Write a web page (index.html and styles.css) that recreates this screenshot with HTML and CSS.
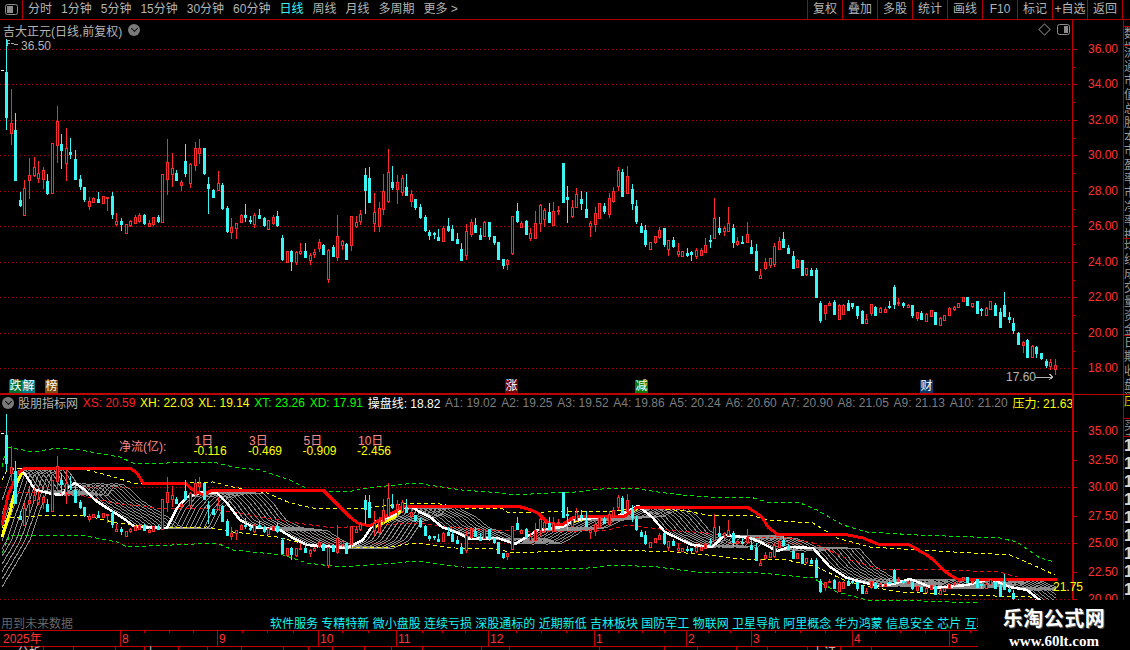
FILE: index.html
```html
<!DOCTYPE html>
<html lang="zh-CN">
  <head>
    <meta charset="UTF-8" />
    <title>吉大正元</title>
    <link rel="stylesheet" href="styles.css">
  </head>
  <body>
    <div class="app">
      <header class="toolbar">
        <div class="panel-toggle">
          <svg class="box-icon" viewBox="0 0 13 11"><rect x="0.5" y="0.5" width="12" height="10" rx="2" class="box-line"></rect><rect x="2" y="2" width="6" height="7" class="box-fill"></rect></svg>
        </div>
        <nav class="periods">
          <span>分时</span><span>1分钟</span><span>5分钟</span><span>15分钟</span><span>30分钟</span><span>60分钟</span>
          <span class="active">日线</span><span>周线</span><span>月线</span><span>多周期</span><span>更多 &gt;</span>
        </nav>
        <nav class="tools">
          <span>复权</span><span>叠加</span><span>多股</span><span>统计</span><span>画线</span><span>F10</span><span>标记</span><span>+自选</span><span>返回</span>
        </nav>
      </header>

      <div class="workspace">
        <div class="charts">
          <section class="pane">
            <svg id="priceChart" class="chart price-chart" viewBox="0 20 1123 375"></svg>
            <div class="pane-title">
              <span>吉大正元(日线,前复权)</span>
              <i class="round-btn"></i>
            </div>
            <div class="pane-tools">
              <span class="diamond"></span>
              <svg class="box-icon" viewBox="0 0 13 11"><rect x="0.5" y="0.5" width="12" height="10" rx="2" class="box-line"></rect><rect x="7" y="2" width="4" height="7" class="box-fill"></rect></svg>
            </div>
            <span class="badge badge-die">跌</span>
            <span class="badge badge-jie">解</span>
            <span class="badge badge-bang">榜</span>
            <span class="badge badge-zhang">涨</span>
            <span class="badge badge-jian">减</span>
            <span class="badge badge-cai">财</span>
          </section>

          <section class="pane">
            <svg id="indicatorChart" class="chart indicator-chart" viewBox="0 395 1123 235"></svg>
            <div class="pane-info">
              <i class="round-btn"></i>
              <span class="info-name">股朋指标网</span>
              <span class="red">XS: 20.59</span>
              <span class="yellow">XH: 22.03</span>
              <span class="yellow">XL: 19.14</span>
              <span class="green">XT: 23.26</span>
              <span class="green">XD: 17.91</span>
              <span class="white">操盘线: 18.82</span>
              <span>A1: 19.02</span>
              <span>A2: 19.25</span>
              <span>A3: 19.52</span>
              <span>A4: 19.86</span>
              <span>A5: 20.24</span>
              <span>A6: 20.60</span>
              <span>A7: 20.90</span>
              <span>A8: 21.05</span>
              <span>A9: 21.13</span>
              <span>A10: 21.20</span>
              <span class="yellow">压力: 21.63</span>
            </div>
            <div class="flows">
              <span class="flow-name">净流(亿):</span>
              <div class="flow"><span>1日</span><b>-0.116</b></div>
              <div class="flow"><span>3日</span><b>-0.469</b></div>
              <div class="flow"><span>5日</span><b>-0.909</b></div>
              <div class="flow"><span>10日</span><b>-2.456</b></div>
            </div>
            <div class="pane-foot">
              <span class="future">用到未来数据</span>
              <span class="tags">软件服务 专精特新 微小盘股 连续亏损 深股通标的 近期新低 吉林板块 国防军工 物联网 卫星导航 阿里概念 华为鸿蒙 信息安全 芯片 互联网</span>
            </div>
          </section>

          <svg id="timeAxis" class="chart time-axis" viewBox="0 630 1123 20"></svg>
        </div>

        <aside class="side">
          <div class="side-cell side-short">数据</div>
          <div class="side-cell side-long">流通市值总股本市盈率市净率换手率振幅量比内盘外盘开盘最高最低昨收均价</div>
          <div class="side-cell side-mid">均线成交量资金主力净额</div>
          <div class="side-cell side-low">日期收盘涨跌幅</div>
          <div class="side-cell side-yellow">压</div>
          <div class="side-cell side-low2">买卖</div>
          <div class="side-cell side-nums">1 1 1 1 1 1 1 1 1 1 1 1 1</div>
        </aside>
      </div>

      <div class="watermark">
        <strong>乐淘公式网</strong>
        <em>www.60lt.com</em>
      </div>
    </div>
    <script src="chart.js"></script>
  </body>
</html>
```

FILE: styles.css
```css
html,
body {
  margin: 0;
  background: #000;
  font-family: "Liberation Sans", "Noto Sans CJK SC", sans-serif;
  font-size: 12px;
  color: #b4b4b4;
}
.app {
  position: relative;
  width: 1130px;
  height: 650px;
  overflow: hidden;
}
.toolbar {
  display: flex;
  height: 19px;
  line-height: 19px;
  border-bottom: 1px solid #b00000;
}
.panel-toggle {
  display: flex;
  align-items: center;
  justify-content: center;
  width: 22px;
  border-right: 1px solid #b00000;
}
.box-icon {
  display: block;
  width: 13px;
  height: 11px;
}
.box-line {
  fill: none;
  stroke: #8c8c8c;
}
.box-fill {
  fill: #8c8c8c;
}
.periods {
  display: flex;
  gap: 9px;
  margin-left: 5px;
}
.periods .active {
  color: #3cf5f5;
}
.tools {
  display: flex;
  margin-left: auto;
  margin-right: 7px;
  border-right: 1px solid #b00000;
}
.tools span {
  width: 34px;
  border-left: 1px solid #b00000;
  text-align: center;
}
.workspace {
  display: flex;
}
.charts {
  width: 1123px;
  border-right: 1px solid #b00000;
}
.pane {
  position: relative;
}
.chart {
  display: block;
  width: 1123px;
}
.price-chart {
  height: 375px;
}
.indicator-chart {
  height: 235px;
}
.time-axis {
  height: 20px;
}
.chart text {
  font-family: "Liberation Sans", "Noto Sans CJK SC", sans-serif;
  font-size: 12px;
}
.pane-title {
  position: absolute;
  top: 2px;
  left: 3px;
  display: flex;
  align-items: center;
  gap: 6px;
  height: 16px;
}
.round-btn {
  position: relative;
  display: block;
  flex: none;
  width: 12px;
  height: 12px;
  border-radius: 50%;
  background: #7a7a7a;
}
.round-btn::after {
  content: "";
  position: absolute;
  top: 2px;
  left: 3.5px;
  width: 4px;
  height: 4px;
  border-right: 1px solid #111;
  border-bottom: 1px solid #111;
  transform: rotate(45deg);
}
.pane-tools {
  position: absolute;
  top: 3px;
  left: 1040px;
  display: flex;
  align-items: center;
  gap: 8px;
  height: 13px;
}
.diamond {
  display: block;
  width: 7px;
  height: 7px;
  border: 1px solid #777;
  transform: rotate(45deg);
}
.badge {
  position: absolute;
  top: 360px;
  width: 13px;
  height: 13px;
  line-height: 13px;
  text-align: center;
  color: #fff;
}
.badge-die {
  left: 9px;
  background: #006f2e;
}
.badge-jie {
  left: 22px;
  background: #007b80;
}
.badge-bang {
  left: 45px;
  background: #7c4a0c;
}
.badge-zhang {
  left: 505px;
  background: #6e0505;
}
.badge-jian {
  left: 635px;
  background: #0a7a0a;
}
.badge-cai {
  left: 920px;
  background: #0c3b6b;
}
.pane-info {
  position: absolute;
  top: 0;
  left: 2px;
  display: flex;
  align-items: center;
  gap: 4.7px;
  width: 1070px;
  height: 15px;
  overflow: hidden;
  white-space: nowrap;
  color: #7d7d7d;
}
.info-name {
  margin-left: -0.7px;
  color: #b4b4b4;
}
.red {
  color: #ff2020;
}
.yellow {
  color: #ffff00;
}
.green {
  color: #00ff00;
}
.white {
  color: #fff;
}
.flows {
  position: absolute;
  top: 41px;
  left: 119px;
  display: flex;
  line-height: 10px;
  color: #ff8a8a;
}
.flow-name {
  width: 74.5px;
  padding-top: 6px;
}
.flow {
  display: flex;
  flex-direction: column;
  width: 54.5px;
}
.flow span {
  padding-left: 1px;
}
.flow b {
  font-weight: 400;
  color: #ffff00;
}
.pane-foot {
  position: absolute;
  left: 1px;
  bottom: 0;
  display: flex;
  align-items: center;
  height: 16px;
  white-space: nowrap;
}
.future {
  width: 269px;
  color: #666;
}
.tags {
  color: #17f4f4;
}
.side {
  width: 6px;
  overflow: hidden;
  line-height: 14px;
  color: #9a9a9a;
}
.side-cell {
  width: 12px;
  overflow: hidden;
  box-sizing: border-box;
  border-bottom: 1px solid #b00000;
  margin-top: 0;
}
.side-short {
  height: 20px;
  margin-top: 6px;
  border-top: 1px solid #b00000;
}
.side-long {
  height: 193px;
}
.side-mid {
  height: 97px;
}
.side-low {
  height: 59px;
}
.side-yellow {
  height: 24px;
  color: #e0e000;
}
.side-low2 {
  height: 18px;
}
.side-nums {
  height: 193px;
  font-size: 16px;
  font-weight: 700;
  line-height: 18px;
  color: #d8d8d8;
  border-bottom: 0;
}
.watermark {
  position: absolute;
  top: 600px;
  left: 978px;
  right: 0;
  bottom: 0;
  display: flex;
  flex-direction: column;
  align-items: center;
  padding-top: 7px;
  background: #000;
  color: #fff;
  box-sizing: border-box;
}
.watermark strong {
  font-size: 20px;
  line-height: 24px;
  letter-spacing: 0.5px;
  text-shadow: 1px 1px 1px #6a6a6a;
}
.watermark em {
  font-family: "Liberation Serif", serif;
  font-size: 15px;
  font-style: normal;
  font-weight: 700;
  line-height: 20px;
}
```

FILE: chart.js
```js
// candles as pixel rows of the price pane: [high, bodyTop, bodyBottom, low, cyan]
const candles = [
  [39,72,117,130,1],[89,123,133,145,0],[113,130,180,180,1],[192,200,205,207,1],[180,188,215,215,0],
  [158,175,180,199,0],[157,167,175,177,0],[161,173,178,183,0],[167,170,179,189,0],[174,181,193,195,1],
  [143,143,193,193,0],[106,121,145,163,0],[134,144,150,169,1],[128,148,163,181,0],[138,152,154,159,1],
  [150,159,179,179,1],[175,179,186,190,1],[187,187,199,202,1],[197,201,206,210,0],[197,198,202,203,0],
  [192,199,202,203,1],[196,196,203,204,0],[197,197,198,211,0],[192,196,214,219,1],[213,221,224,226,0],
  [218,221,224,231,1],[224,224,233,233,0],[220,221,225,227,0],[215,217,223,223,0],[213,215,221,223,0],
  [214,215,223,225,1],[220,223,226,227,0],[217,217,224,226,0],[215,217,221,223,1],[174,174,222,222,0],
  [139,162,179,195,0],[153,168,174,187,0],[170,173,180,180,1],[180,182,185,191,0],[144,161,173,177,1],
  [163,164,183,188,0],[142,148,165,171,0],[139,148,153,164,0],[148,148,173,175,1],[177,184,188,214,1],
  [189,190,197,198,1],[171,183,190,190,0],[183,185,208,210,1],[206,208,231,233,1],[218,227,232,239,0],
  [223,223,228,239,0],[214,215,222,223,0],[204,215,217,222,1],[216,220,221,224,1],[213,215,224,228,0],
  [209,215,218,219,1],[217,218,225,227,1],[220,220,229,229,0],[215,217,223,225,0],[211,216,225,227,1],
  [235,238,259,261,1],[251,251,262,262,0],[250,251,261,271,1],[251,252,262,265,0],[243,251,253,255,0],
  [243,251,257,257,1],[253,255,260,265,0],[249,252,254,258,0],[239,242,248,252,0],[244,245,254,255,1],
  [249,250,279,283,0],[245,247,256,257,1],[215,236,257,261,0],[240,241,245,250,0],[243,244,259,259,1],
  [216,216,245,251,0],[216,222,226,228,0],[210,214,221,225,0],[168,175,190,214,1],[167,178,202,203,1],
  [193,212,223,232,0],[202,208,226,232,0],[174,191,209,215,0],[149,172,201,203,0],[166,182,187,190,1],
  [175,182,189,204,0],[175,178,192,196,0],[174,187,195,196,1],[190,194,201,207,0],[199,199,207,210,1],
  [204,207,217,219,1],[215,217,230,232,1],[230,232,235,240,1],[232,233,234,239,1],[229,237,240,240,1],
  [226,228,241,241,0],[218,226,230,232,1],[225,229,240,241,1],[233,239,243,244,1],[243,249,260,261,1],
  [224,231,255,260,0],[219,222,234,237,0],[218,225,232,233,1],[228,235,239,239,1],[221,222,236,237,0],
  [222,222,236,240,1],[236,236,242,245,1],[242,242,259,260,1],[259,259,265,269,1],[259,260,264,270,0],
  [216,216,253,255,0],[203,211,221,223,1],[221,223,227,228,0],[220,221,234,235,1],[228,233,238,241,0],
  [211,223,238,239,0],[204,205,223,232,0],[208,210,219,227,0],[203,212,222,223,1],[202,211,225,225,0],
  [206,210,211,215,0],[163,163,202,203,1],[186,197,199,223,1],[200,207,216,218,0],[188,194,207,207,0],
  [191,199,203,210,1],[192,209,217,217,1],[221,223,226,237,0],[207,213,224,232,0],[203,203,218,219,0],
  [203,206,211,214,1],[193,198,214,218,0],[187,191,201,203,0],[167,170,186,191,0],[169,172,196,197,1],
  [166,176,193,193,0],[184,189,203,210,1],[200,206,221,224,1],[223,226,232,232,1],[225,230,244,247,1],
  [242,242,249,249,0],[236,236,242,244,0],[227,230,237,239,0],[228,228,244,247,1],[240,240,249,256,0],
  [237,240,246,248,1],[243,251,254,257,0],[251,251,256,257,0],[248,253,255,257,1],[251,252,254,261,1],
  [248,250,256,259,0],[248,250,255,256,0],[238,245,252,253,0],[235,240,241,248,1],[198,218,238,238,0],
  [217,228,232,235,1],[226,228,231,236,0],[207,223,231,231,0],[224,228,242,248,1],[237,241,244,246,0],
  [236,242,243,244,1],[222,234,242,243,0],[240,247,253,253,1],[244,251,270,270,1],[269,275,278,279,0],
  [258,262,268,270,0],[258,258,265,268,0],[243,246,264,267,0],[237,241,249,249,0],[232,239,247,248,1],
  [245,248,253,254,1],[251,256,268,268,1],[259,260,267,267,0],[260,260,275,275,1],[268,268,274,276,0],
  [268,270,275,276,1],[268,270,297,297,1],[301,303,320,323,1],[305,305,313,320,0],[301,303,305,306,0],
  [300,302,314,315,1],[304,305,319,319,0],[304,305,314,315,0],[300,303,310,311,1],[303,303,306,309,1],
  [306,306,315,319,1],[310,311,323,324,1],[314,319,323,323,0],[304,304,313,316,0],[306,307,315,316,1],
  [307,308,312,313,0],[307,309,312,313,0],[301,306,307,309,1],[285,287,304,309,1],[298,302,303,306,0],
  [302,303,305,308,1],[304,305,307,308,0],[305,305,315,318,1],[312,312,318,321,0],[311,313,319,320,1],
  [313,314,321,321,0],[310,310,316,316,0],[312,312,324,325,1],[317,318,325,325,0],[315,315,320,321,0],
  [307,308,315,315,0],[306,307,309,311,0],[303,303,307,308,0],[297,297,301,301,0],[297,297,305,306,1],
  [303,303,306,308,0],[301,301,313,313,1],[308,309,310,316,1],[307,308,315,316,0],[301,301,309,309,0],
  [303,305,315,316,1],[308,312,327,327,1],[292,305,316,317,1],[312,317,319,323,1],[318,323,330,334,1],
  [332,333,344,345,1],[341,342,345,353,0],[339,340,357,358,1],[345,346,357,358,0],[346,347,353,358,1],
  [353,353,358,360,1],[359,361,365,368,1],[359,362,366,370,0],[359,365,369,375,0]
];

const whitePoints = [[-44,587],[-23,552],[-16,540],[6,475],[20,468],[27,477],[35,490],[53,494],[62,495],[67,488],[75,483],[85,490],[95,500],[107,508],[123,518],[135,527],[167,528],[177,508],[187,497],[203,492],[217,493],[227,503],[240,520],[253,527],[280,530],[293,538],[307,545],[347,548],[363,540],[375,522],[395,515],[400,508],[412,507],[420,512],[430,517],[442,527],[458,533],[470,539],[498,538],[515,544],[525,538],[538,530],[562,527],[575,520],[602,517],[618,516],[638,506],[652,517],[665,532],[692,545],[712,547],[725,535],[750,538],[760,542],[777,551],[790,547],[813,548],[830,567],[847,578],[877,586],[893,584],[910,579],[933,588],[967,585],[990,579],[1010,587],[1027,590],[1037,598],[1057,612]];

const redPoints = [[2,525],[8,495],[18,473],[25,468],[130,468],[137,473],[143,483],[185,483],[193,490],[203,495],[212,490],[323,490],[333,500],[350,517],[358,523],[370,526],[382,518],[395,512],[403,506],[517,506],[528,509],[538,513],[548,523],[562,525],[572,518],[578,516],[625,516],[637,507],[747,507],[755,512],[762,517],[768,527],[777,534],[843,534],[863,538],[878,544],[908,544],[930,557],[947,573],[957,579],[1057,580]];

const yellowSegments = [
  [[2,537],[10,512],[17,483],[23,470]],
  [[375,527],[395,517],[403,507]],
  [[555,526],[575,521],[590,517]],
  [[620,516],[635,510],[640,506]]
];

const dashed = [
  ["#00e800", [[2,467],[5,453],[7,447],[33,452],[57,448],[80,450],[97,453],[120,457],[133,463],[167,463],[213,462],[233,467],[260,470],[290,480],[310,490],[347,492],[367,488],[395,485],[418,483],[428,485],[462,490],[502,493],[515,495],[548,493],[575,492],[602,489],[632,488],[658,492],[682,495],[708,497],[750,497],[767,502],[800,503],[817,510],[843,525],[867,532],[917,535],[1000,538],[1017,542],[1040,558],[1055,562]]],
  ["#ffff00", [[2,480],[7,470],[20,468],[85,470],[100,473],[117,478],[133,483],[167,483],[213,482],[233,487],[267,493],[290,503],[313,508],[367,508],[408,503],[435,503],[462,508],[502,508],[508,513],[548,512],[615,511],[642,507],[685,511],[708,515],[750,515],[767,520],[813,523],[837,538],[870,547],[917,550],[1010,555],[1033,565],[1055,575]]],
  ["#f01010", [[18,492],[53,493],[80,495],[113,503],[157,508],[207,508],[250,515],[290,522],[333,528],[375,525],[418,523],[448,527],[485,530],[548,532],[608,530],[628,525],[668,530],[705,533],[750,537],[783,537],[813,543],[850,560],[883,570],[917,569],[1000,572],[1017,577]]],
  ["#ffff00", [[2,528],[7,518],[50,515],[83,515],[117,523],[160,528],[207,527],[233,532],[277,537],[317,547],[388,547],[415,543],[455,548],[495,549],[515,553],[562,551],[615,550],[675,552],[708,555],[750,560],[783,559],[817,567],[850,583],[900,592],[960,595],[1030,597],[1057,610]]],
  ["#00e800", [[2,553],[10,535],[43,535],[80,535],[117,542],[127,547],[217,543],[233,550],[283,555],[307,563],[340,567],[395,563],[418,561],[462,567],[502,568],[588,568],[615,565],[658,567],[695,572],[750,572],[813,578],[837,592],[867,600],[897,600],[978,603]]]
];

const AXIS_X = 1072;

function line(x1, y1, x2, y2, color, extra = "") {
  return `<line x1="${x1}" y1="${y1}" x2="${x2}" y2="${y2}" stroke="${color}" shape-rendering="crispEdges" ${extra}/>`;
}

function text(x, y, value, color) {
  return `<text x="${x}" y="${y}" fill="${color}">${value}</text>`;
}

function polyline(points, color, width, extra = "") {
  const d = points.map((p) => p.join(",")).join(" ");
  return `<polyline points="${d}" fill="none" stroke="${color}" stroke-width="${width}" shape-rendering="crispEdges" ${extra}/>`;
}

// lay a price-pane row into whatever pane is being drawn
function drawCandles(mapY) {
  let out = "";
  candles.forEach((c, i) => {
    const x = Math.round(6 + 4.6 * i);
    const hi = Math.round(mapY(c[0]));
    const top = Math.round(mapY(c[1]));
    const bot = Math.max(Math.round(mapY(c[2])), top + 1);
    const lo = Math.round(mapY(c[3]));
    const color = c[4] ? "#3cf5f5" : "#ff2a2a";
    out += `<rect x="${x}" y="${hi}" width="1" height="${Math.max(lo - hi, 1)}" fill="${color}"/>`;
    out += `<rect x="${x - 1}" y="${top}" width="3" height="${bot - top + 1}" fill="${color}"/>`;
    if (!c[4] && bot - top > 1) {
      out += `<rect x="${x}" y="${top + 1}" width="1" height="${bot - top - 1}" fill="#000"/>`;
    }
  });
  return `<g shape-rendering="crispEdges">${out}</g>`;
}

function whiteAt(t) {
  for (let i = 1; i < whitePoints.length; i++) {
    const a = whitePoints[i - 1];
    const b = whitePoints[i];
    if (t <= b[0]) return a[1] + ((t - a[0]) / (b[0] - a[0])) * (b[1] - a[1]);
  }
  return whitePoints[whitePoints.length - 1][1];
}

function drawPrice() {
  let s = "";
  const rows = [[49, "36.00"], [84, "34.00"], [120, "32.00"], [155, "30.00"], [191, "28.00"], [226, "26.00"], [262, "24.00"], [297, "22.00"], [333, "20.00"], [368, "18.00"]];
  rows.forEach(([y, label], i) => {
    s += line(0, y + 0.5, AXIS_X, y + 0.5, "#b00000", 'stroke-dasharray="1 3"');
    s += line(AXIS_X, y + 0.5, AXIS_X + 5, y + 0.5, "#c80000");
    if (i < rows.length - 1) s += line(AXIS_X, y + 18.5, AXIS_X + 3, y + 18.5, "#c80000");
    s += text(1088, y + 4, label, "#ff3232");
  });
  s += line(AXIS_X + 0.5, 20, AXIS_X + 0.5, 395, "#c00000");
  s += line(0, 394, AXIS_X, 394, "#c00000", 'stroke-width="2"');
  s += line(AXIS_X, 394.5, 1123, 394.5, "#c00000");
  s += drawCandles((y) => y);
  // high and low markers
  s += line(1, 70.5, 4, 70.5, "#ffffff");
  s += polyline([[7, 46], [7, 40], [10, 40]], "#aaaaaa", 1) + polyline([[7, 43], [10, 43]], "#aaaaaa", 1);
  s += polyline([[11, 43], [14, 44], [18, 45]], "#aaaaaa", 1);
  s += text(21, 50, "36.50", "#b4b4b4");
  s += text(1006, 381, "17.60", "#b4b4b4");
  s += line(1035, 377.5, 1053, 377.5, "#b4b4b4");
  s += polyline([[1049, 374], [1053, 377], [1049, 380]], "#b4b4b4", 1);
  document.getElementById("priceChart").innerHTML = s;
}

function drawIndicator() {
  let s = "";
  [[431, "35.00"], [487, "30.00"], [543, "25.00"], [599, "20.00"]].forEach(([y]) => {
    s += line(0, y + 0.5, AXIS_X, y + 0.5, "#b00000", 'stroke-dasharray="1 3"');
  });
  [[431, "35.00"], [460, "32.50"], [487, "30.00"], [516, "27.50"], [543, "25.00"], [572, "22.50"], [599, "20.00"]].forEach(([y, label]) => {
    s += line(AXIS_X, y + 0.5, AXIS_X + 5, y + 0.5, "#c80000");
    s += text(1088, y + 4, label, "#ff3232");
  });
  s += line(AXIS_X + 0.5, 395, AXIS_X + 0.5, 630, "#c00000", 'stroke-width="2"');

  // A1..A10: the white line with a growing delay
  for (let k = 1; k <= 10; k++) {
    const pts = [];
    for (let x = 2; x <= 1057; x += 2) pts.push([x, Math.round(whiteAt(x - k * 4.6))]);
    s += polyline(pts, "#8c8c8c", 1);
  }
  dashed.forEach(([color, pts]) => {
    s += polyline(pts, color, 1, 'stroke-dasharray="4 3"');
  });
  yellowSegments.forEach((pts) => {
    s += polyline(pts, "#ffff00", 3);
  });
  s += polyline([[1000, 579], [1057, 579]], "#d8d850", 1);
  s += polyline(whitePoints.filter((p) => p[0] >= 20), "#ffffff", 2.5);
  s += polyline(redPoints, "#ff0000", 3);
  s += drawCandles((y) => 420.5 + 0.631 * (y - 49.3));
  s += line(1, 433.5, 4, 433.5, "#ffffff");
  s += text(1053, 591, "21.75", "#ffff00");
  document.getElementById("indicatorChart").innerHTML = s;
}

function drawTimeAxis() {
  let s = line(0, 630.5, 1123, 630.5, "#c00000") + line(0, 646.5, 1123, 646.5, "#c00000");
  const majors = [[120, "8"], [217, "9"], [318, "10"], [396, "11"], [488, "12"], [594, "1"], [686, "2"], [751, "3"], [852, "4"], [949, "5"]];
  s += text(3, 643, "2025年", "#ff3232");
  majors.forEach(([x, label]) => {
    s += line(x + 0.5, 630, x + 0.5, 646, "#c00000");
    s += text(x + 2, 643, label, "#ff3232");
  });
  [144, 169, 193, 242, 267, 293, 342, 368, 422, 442, 465, 516, 541, 566, 618, 642, 664, 708, 730, 775, 800, 825, 875, 900, 925, 970].forEach((x) => {
    s += line(x + 0.5, 631, x + 0.5, 633, "#c00000");
  });
  [43, 73, 115, 144, 178, 207, 241, 283, 308, 332, 364, 391, 422, 481, 509, 599, 664, 697, 736, 767, 807, 840, 871].forEach((x) => {
    s += line(x + 0.5, 647, x + 0.5, 650, "#c00000");
  });
  s += text(17, 657, "分析", "#c8c8c8") + text(145, 657, "上", "#c8c8c8") + text(812, 657, "上证", "#c8c8c8");
  document.getElementById("timeAxis").innerHTML = s;
}

drawPrice();
drawIndicator();
drawTimeAxis();
```
